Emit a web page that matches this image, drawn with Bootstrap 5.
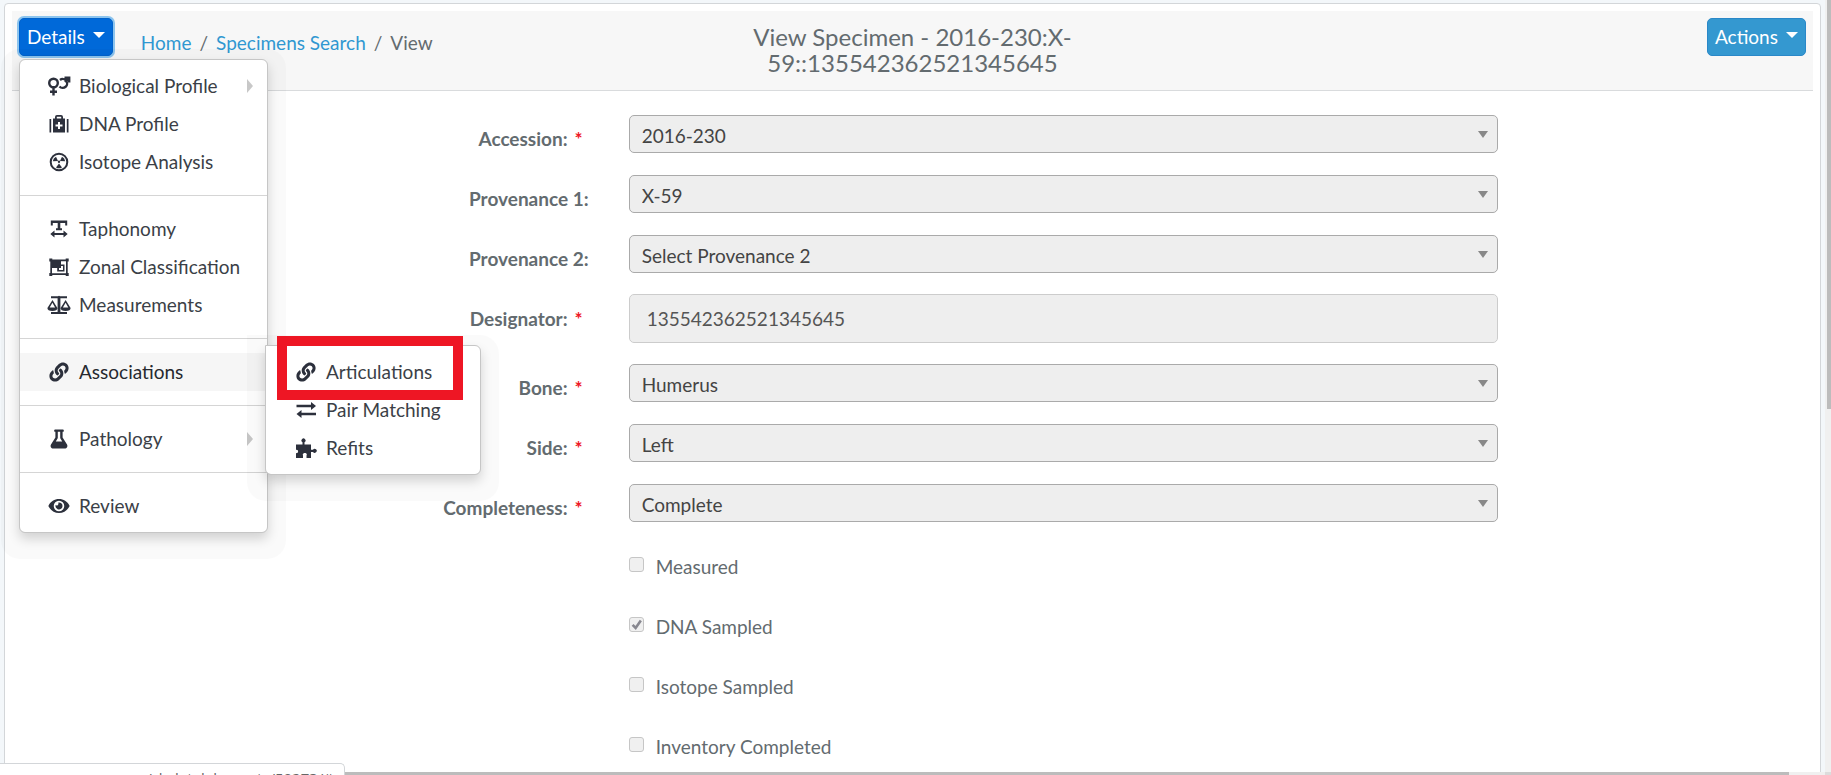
<!DOCTYPE html>
<html lang="en">
<head>
<meta charset="utf-8">
<meta name="viewport" content="width=device-width, initial-scale=1">
<title>View Specimen</title>
<link rel="stylesheet" href="https://cdn.jsdelivr.net/npm/bootstrap@5.3.0/dist/css/bootstrap.min.css">
<style>
  body { font-family: Lato, "Liberation Sans", sans-serif; font-size: 19px; line-height: 28px; color: #636b6f; background: #f3f7fa; }
  .app { height: 100vh; display: grid; grid-template: minmax(0, 1fr) 3px / minmax(0, 1fr) 6px; overflow: hidden; position: relative; }
  .app-view { padding: 3px 4px 0; overflow: hidden; }
  .panel { min-height: 100vh; border: 1px solid #d3d6d9; border-radius: 4px; padding: 7px; background: #fff; }
  .panel-head { min-height: 80px; background: #f7f7f7; border-bottom: 1px solid #d9dbdd; padding: 7px; }
  .panel-head .title { font-size: 24px; font-weight: 400; line-height: 26px; margin: 6px 0 0; color: #636b6f; }
  .btn-tool { font-size: 19px; line-height: 28px; padding: 4px 7px; border-radius: 5px; color: #fff; display: inline-flex; align-items: center; gap: 8px; }
  .btn-tool::after { margin: 0 0 4px; border-width: 6px 6px 0; }
  .btn-details, .btn-details.show { background: #0069d9; border-color: #0062cc; color: #fff; box-shadow: 0 0 0 2px #8cc4ee; }
  .btn-actions { background: #3498d0; border-color: #2a88c8; }
  .crumbs { --bs-breadcrumb-divider-color: #636b6f; --bs-breadcrumb-item-padding-x: 8px; margin: 11px 0 0 28px; }
  .crumbs li + li { padding-left: 16px; }
  .crumbs a { color: #3097d1; text-decoration: none; }
  .menu { --bs-dropdown-padding-y: 7px; --bs-dropdown-padding-x: 0; --bs-dropdown-font-size: 19px; --bs-dropdown-border-color: #c6c6c6; --bs-dropdown-border-radius: 6px; --bs-dropdown-divider-margin-y: 14px; --bs-dropdown-divider-bg: #d5d5d5; --bs-dropdown-item-padding-y: 5px; box-shadow: 0 6px 12px rgba(0,0,0,.16), 0 8px 0 18px rgba(0,0,0,.018); }
  .menu hr { opacity: 1; }
  .menu .dropdown-item { display: flex; align-items: center; gap: 8px; padding-left: 27px; padding-right: 14px; color: #3b3f47; line-height: 28px; }
  .menu .dropdown-item.hovered { background: #f6f6f6; color: #26292f; }
  .menu svg { width: 24px; height: 20px; flex: none; color: #2c303c; }
  .menu-main { width: 249px; top: 100%; left: 0; margin-top: 3px; }
  .menu-sub { width: 216px; top: -8px; left: 100%; margin-left: -2px; border-radius: 0 6px 6px 6px; }
  .more::after { content: ""; margin-left: auto; border: 7px solid transparent; border-left: 6px solid #c8c8c8; border-right: 0; }
  .menu-sub .dropdown-item { padding-left: 28px; }
  .highlight { position: absolute; inset: -10px 17px auto 11px; height: 64px; border: 10px solid #ee1624; pointer-events: none; }
  .specimen { padding: 23px 0 0 2px; }
  .specimen .row { --bs-gutter-x: 30px; margin: 0 0 20px; min-height: 40px; }
  .specimen .name { font-weight: 700; text-align: right; padding: 11px 25px 0 0; line-height: 28px; }
  .specimen .name.required { padding-right: 31px; }
  .required::after { content: "*"; color: #ee1624; margin-left: 7px; }
  .specimen .form-select, .specimen .form-control { font-size: 19px; line-height: 28px; background-color: #eee; color: #444; opacity: 1; border-radius: 5px; }
  .specimen .form-select { height: 38px; padding: 6px 36px 2px 12px; border-color: #aaa; margin-top: 1px;
    background-image: url("data:image/svg+xml,%3Csvg xmlns='http://www.w3.org/2000/svg' viewBox='0 0 10 7'%3E%3Cpath d='M0 0h10L5 7z' fill='%23888'/%3E%3C/svg%3E"); background-size: 10px 7px; background-position: right 9px center; }
  .specimen .form-control { height: 49px; padding: 9px 17px; border-color: #ccc; color: #555; }
  .specimen .form-check { padding: 9px 0 0; margin: 0; min-height: 0; display: flex; gap: 12px; }
  .specimen .form-check-input { float: none; width: 15px; height: 15px; margin: 5px 0 0; border: 1px solid #c6c6c6; border-radius: 3px; background-color: #f0f0f0; opacity: 1; flex: none; }
  .specimen .form-check-input:checked { background-image: url("data:image/svg+xml,%3Csvg xmlns='http://www.w3.org/2000/svg' viewBox='0 0 15 15'%3E%3Cpath d='M3 8l3.500 3.500L12.500 3' fill='none' stroke='%23888890' stroke-width='3'/%3E%3C/svg%3E"); }
  .specimen .form-check-label, .specimen .form-check-input:disabled ~ .form-check-label { opacity: 1; padding-top: 1px; }
  .bar-y { background: #f0f0f0; padding-left: 2px; }
  .bar-y div { height: 53%; background: #bcbcbc; }
  .bar-x { background: #f0f0f0; }
  .bar-x div { width: 98%; height: 100%; background: #bcbcbc; }
  .bar-end { background: #dcdcdc; }
  .status { position: absolute; left: 0; bottom: 0; width: 345px; height: 12px; overflow: hidden; background: #fff; border: 1px solid #d3d6d9; border-width: 1px 1px 0 0; border-top-right-radius: 5px; padding: 4px 11px 0 3px; font: 15px/20px "Open Sans", sans-serif; color: #666; text-align: right; white-space: nowrap; }
</style>
</head>
<body>
<div class="app">
  <main class="app-view">
    <section class="panel">
      <header class="panel-head row g-0">
        <div class="col-4 d-flex align-items-start">
          <div class="dropdown">
            <button class="btn btn-tool btn-details dropdown-toggle" type="button" aria-expanded="true">Details</button>
            <ul class="dropdown-menu show menu menu-main">
              <li><a class="dropdown-item more" href="#"><svg viewBox="0 0 24 20" fill="none" stroke="currentColor" stroke-width="2.400"><circle cx="6.500" cy="7" r="4.300"/><path d="M6.500 11.300V19.500M3 15.700h7M13 4a4.400 4.400 0 1 1-.5 6.500M18 6L22 2M17.500 1.800H22.200V6.500"/></svg>Biological Profile</a></li>
              <li><a class="dropdown-item" href="#"><svg viewBox="0 0 24 20" fill="currentColor" fill-rule="evenodd"><path d="M2.500 5h1.700v13.500H2.500zM19.800 5h1.700v13.500h-1.700zM6 4.500h2V3q0-2 2-2h4q2 0 2 2v1.500h2v14H6zM9.800 2.800v1.700h4.400V2.800zM11 8v2.500H8.500v2H11V15h2v-2.500h2.500v-2H13V8z"/></svg>DNA Profile</a></li>
              <li><a class="dropdown-item" href="#"><svg viewBox="0 0 24 20"><circle cx="12" cy="10" r="8.300" fill="none" stroke="currentColor" stroke-width="2"/><path fill="currentColor" d="M5.800 9.200A6 6 0 0 1 9 4.800l2 4.200zM18.200 9.200A6 6 0 0 0 15 4.800l-2 4.200zM12 11.500l3 4a6 6 0 0 1-6 0z"/><circle cx="12" cy="9.800" r="1.200" fill="currentColor"/></svg>Isotope Analysis</a></li>
              <li><hr class="dropdown-divider"></li>
              <li><a class="dropdown-item" href="#"><svg viewBox="0 0 24 20" fill="currentColor"><path d="M3.800 1.500h16.400v5h-2V4h-4.900v5.300H15v2H9v-2h1.700V4H5.800v2.500h-2zM3.300 15l4.200-3.500V14h9v-2.500l4.200 3.500-4.200 3.500V16h-9v2.500z"/></svg>Taphonomy</a></li>
              <li><a class="dropdown-item" href="#"><svg viewBox="0 0 24 20" fill="currentColor" fill-rule="evenodd"><path d="M2.300 1.500h3v1h13.400v-1h3v3h-1v11.500h1v3h-3v-1H5.300v1h-3v-3h1V4.500h-1zM5 4.200v12.100h14V4.200zM5 4.200h9v3.300h3.500v7h-7.300v-3.500H5zM12 11v2h4V9h-2v2z"/></svg>Zonal Classification</a></li>
              <li><a class="dropdown-item" href="#"><svg viewBox="0 0 24 20" fill="currentColor" fill-rule="evenodd"><path d="M11 1.300a1.500 1.500 0 0 1 2 0h7v2h-6.600v13.700h6.600V19H4v-2h6.600V3.300H4v-2zM5.500 5l4.900 8q0 3-5 3t-5-3zM5.400 7.800L2.700 12.600h5.400zM18.600 5l5 8q0 3-5 3t-5-3zM18.600 7.800l-2.700 4.800h5.400z"/></svg>Measurements</a></li>
              <li><hr class="dropdown-divider"></li>
              <li class="position-relative">
                <a class="dropdown-item hovered" href="#"><svg viewBox="-64 -10 640 532" fill="currentColor"><path id="chain" d="M326.612 185.391c59.747 59.809 58.927 155.698.36 214.59-.11.12-.24.25-.36.37l-67.2 67.2c-59.27 59.27-155.699 59.262-214.96 0-59.27-59.26-59.27-155.7 0-214.96l37.106-37.106c9.84-9.84 26.786-3.3 27.294 10.606.648 17.722 3.826 35.527 9.69 52.721 1.986 5.822.567 12.262-3.783 16.612l-13.087 13.087c-28.026 28.026-28.905 73.66-1.155 101.96 28.024 28.579 74.086 28.749 102.325.51l67.2-67.19c28.191-28.191 28.073-73.757 0-101.83-3.701-3.694-7.429-6.564-10.341-8.569a16.037 16.037 0 0 1-6.947-12.606c-.396-10.567 3.348-21.456 11.698-29.806l21.054-21.055c5.521-5.521 14.182-6.199 20.584-1.731a152.482 152.482 0 0 1 20.522 17.197zM467.547 44.449c-59.261-59.262-155.69-59.27-214.96 0l-67.2 67.2c-.12.12-.25.25-.36.37-58.566 58.892-59.387 154.781.36 214.59a152.454 152.454 0 0 0 20.521 17.196c6.402 4.468 15.064 3.789 20.584-1.731l21.054-21.055c8.35-8.35 12.094-19.239 11.698-29.806a16.037 16.037 0 0 0-6.947-12.606c-2.912-2.005-6.64-4.875-10.341-8.569-28.073-28.073-28.191-73.639 0-101.83l67.2-67.19c28.239-28.239 74.3-28.069 102.325.51 27.75 28.3 26.872 73.934-1.155 101.96l-13.087 13.087c-4.35 4.35-5.769 10.79-3.783 16.612 5.864 17.194 9.042 34.999 9.69 52.721.509 13.906 17.454 20.446 27.294 10.606l37.106-37.106c59.271-59.259 59.271-155.699.001-214.959z"/></svg>Associations</a>
                <ul class="dropdown-menu show menu menu-sub">
                  <li><a class="dropdown-item" href="#"><svg viewBox="-64 -10 640 532" fill="currentColor"><use href="#chain"/></svg>Articulations</a></li>
                  <li><a class="dropdown-item" href="#"><svg viewBox="0 0 24 20" fill="currentColor"><path d="M2.500 4.800h14.500V2l5 4-5 4V7.200H2.500zM22 12.800H7.500V10l-5 4 5 4v-2.800H22z"/></svg>Pair Matching</a></li>
                  <li><a class="dropdown-item" href="#"><svg viewBox="0 0 24 20" fill="currentColor"><path d="M2 6.500h6.500V4.300a2 2 0 1 1 2 0v2.200H17v5.200h2a2 2 0 1 1 0 2.200h-2V20h-4.500v-2.500c1.800-3.500-5-3.500-3.500 0V20H2v-5c2.800 1 2.800-4 0-3z"/></svg>Refits</a></li>
                  <li class="highlight" aria-hidden="true"></li>
                </ul>
              </li>
              <li><hr class="dropdown-divider"></li>
              <li><a class="dropdown-item more" href="#"><svg viewBox="-64 -10 576 532" fill="currentColor"><path d="M437.200 403.500L320 215V64h8c13.300 0 24-10.700 24-24V24c0-13.300-10.700-24-24-24H120c-13.300 0-24 10.700-24 24v16c0 13.300 10.700 24 24 24h8v151L10.800 403.500C-18.500 450.600 15.300 512 70.900 512h306.200c55.700 0 89.400-61.500 60.100-108.500zM137.900 320l48.200-77.600c3.700-5.200 5.800-11.600 5.800-18.400V64h64v160c0 6.900 2.200 13.200 5.800 18.400l48.200 77.600h-172z"/></svg>Pathology</a></li>
              <li><hr class="dropdown-divider"></li>
              <li><a class="dropdown-item" href="#"><svg viewBox="-40 0 656 512" fill="currentColor"><path d="M572.520 241.400C518.290 135.590 410.930 64 288 64S57.680 135.640 3.480 241.410a32.350 32.350 0 0 0 0 29.190C57.710 376.410 165.070 448 288 448s230.320-71.640 284.520-177.410a32.350 32.350 0 0 0 0-29.190zM288 400a144 144 0 1 1 144-144 143.930 143.930 0 0 1-144 144zm0-240a95.310 95.310 0 0 0-25.310 3.790 47.850 47.850 0 0 1-66.900 66.900A95.780 95.780 0 1 0 288 160z"/></svg>Review</a></li>
            </ul>
          </div>
          <nav aria-label="breadcrumb">
            <ol class="breadcrumb crumbs">
              <li class="breadcrumb-item"><a href="#">Home</a></li>
              <li class="breadcrumb-item"><a href="#">Specimens Search</a></li>
              <li class="breadcrumb-item" aria-current="page">View</li>
            </ol>
          </nav>
        </div>
        <div class="col-4 px-2 text-center"><h1 class="title">View Specimen - 2016-230:X-59::135542362521345645</h1></div>
        <div class="col-4 text-end"><button class="btn btn-tool btn-actions dropdown-toggle" type="button">Actions</button></div>
      </header>

      <form class="specimen">
        <div class="row"><label class="col-4 name required" for="accession">Accession:</label><div class="col-6"><select class="form-select" id="accession" disabled><option>2016-230</option></select></div></div>
        <div class="row"><label class="col-4 name" for="prov1">Provenance 1:</label><div class="col-6"><select class="form-select" id="prov1" disabled><option>X-59</option></select></div></div>
        <div class="row"><label class="col-4 name" for="prov2">Provenance 2:</label><div class="col-6"><select class="form-select" id="prov2" disabled><option>Select Provenance 2</option></select></div></div>
        <div class="row"><label class="col-4 name required" for="designator">Designator:</label><div class="col-6"><input class="form-control" id="designator" type="text" value="135542362521345645" disabled></div></div>
        <div class="row"><label class="col-4 name required" for="bone">Bone:</label><div class="col-6"><select class="form-select" id="bone" disabled><option>Humerus</option></select></div></div>
        <div class="row"><label class="col-4 name required" for="side">Side:</label><div class="col-6"><select class="form-select" id="side" disabled><option>Left</option></select></div></div>
        <div class="row"><label class="col-4 name required" for="complete">Completeness:</label><div class="col-6"><select class="form-select" id="complete" disabled><option>Complete</option></select></div></div>
        <div class="row"><div class="col-6 offset-4"><div class="form-check"><input class="form-check-input" type="checkbox" id="measured" disabled><label class="form-check-label" for="measured">Measured</label></div></div></div>
        <div class="row"><div class="col-6 offset-4"><div class="form-check"><input class="form-check-input" type="checkbox" id="dna" checked disabled><label class="form-check-label" for="dna">DNA Sampled</label></div></div></div>
        <div class="row"><div class="col-6 offset-4"><div class="form-check"><input class="form-check-input" type="checkbox" id="isotope" disabled><label class="form-check-label" for="isotope">Isotope Sampled</label></div></div></div>
        <div class="row"><div class="col-6 offset-4"><div class="form-check"><input class="form-check-input" type="checkbox" id="inventory" disabled><label class="form-check-label" for="inventory">Inventory Completed</label></div></div></div>
      </form>
    </section>
  </main>
  <div class="bar-y"><div></div></div>
  <div class="bar-x"><div></div></div>
  <div class="bar-end"></div>
  <div class="status">/skeletalelements/50273/#</div>
</div>
<script src="https://cdn.jsdelivr.net/npm/bootstrap@5.3.0/dist/js/bootstrap.bundle.min.js"></script>
</body>
</html>
